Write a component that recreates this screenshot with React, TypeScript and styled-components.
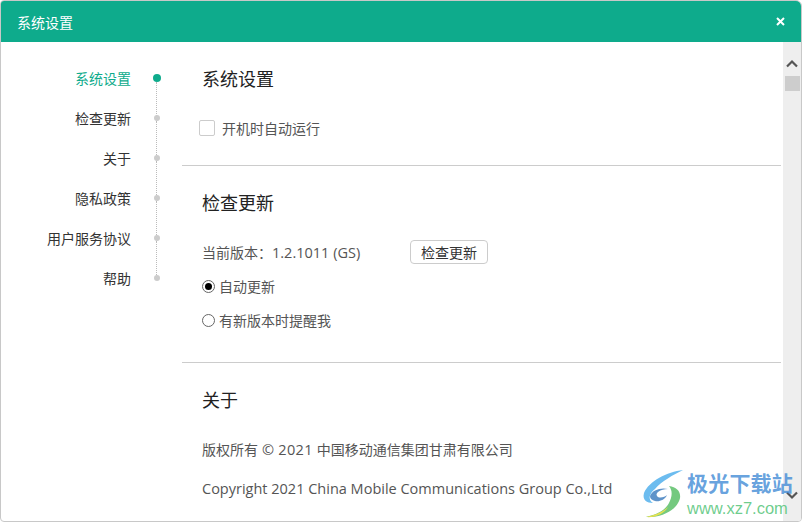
import React from 'react';
import styled, { createGlobalStyle } from 'styled-components';

const GlobalStyle = createGlobalStyle`
  html, body {
    margin: 0;
    padding: 0;
    background: #fff;
  }
  body {
    font-family: Inter, "Noto Sans CJK SC", "Liberation Sans", sans-serif;
  }
`;

const Window = styled.div`
  position: relative;
  width: 802px;
  height: 522px;
  box-sizing: border-box;
  border: 1px solid #c8c8c8;
  border-radius: 4px 6px 4px 4px;
  display: flex;
  flex-direction: column;
  overflow: hidden;
  background: #fff;
`;

const TitleBar = styled.header`
  flex: 0 0 41px;
  display: flex;
  align-items: center;
  justify-content: space-between;
  padding: 0 16px 0 16px;
  background: #0eab8c;
  color: #fff;
  font-size: 14px;
`;

const CloseButton = styled.button`
  display: flex;
  padding: 0;
  border: none;
  background: none;
`;

const Body = styled.div`
  flex: 1;
  min-height: 0;
  display: flex;
`;

const Nav = styled.nav`
  flex: 0 0 181px;
  box-sizing: border-box;
  padding-top: 16px;
`;

const NavRow = styled.div<{ $active?: boolean }>`
  height: 40px;
  display: flex;
  align-items: center;
  justify-content: flex-end;
  padding-right: 21px;
  font-size: 14px;
  color: ${(p) => (p.$active ? '#0eab8c' : '#333')};
`;

const NavDot = styled.span<{ $active?: boolean; $last?: boolean }>`
  position: relative;
  width: ${(p) => (p.$active ? '8px' : '6px')};
  height: ${(p) => (p.$active ? '8px' : '6px')};
  margin-left: ${(p) => (p.$active ? '22px' : '23px')};
  margin-right: ${(p) => (p.$active ? '0' : '1px')};
  border-radius: 50%;
  background: ${(p) => (p.$active ? '#0eab8c' : '#ccc')};

  &::after {
    content: '';
    display: ${(p) => (p.$last ? 'none' : 'block')};
    position: absolute;
    left: ${(p) => (p.$active ? '3px' : '2px')};
    top: 100%;
    height: 36px;
    border-left: 1px dotted #bbb;
  }
`;

const Main = styled.main`
  flex: 0 0 599px;
  overflow: hidden;
`;

const Section = styled.section<{ $height: number; $ruled?: boolean }>`
  height: ${(p) => p.$height}px;
  box-sizing: border-box;
  padding: 24px 20px 0;
  border-bottom: ${(p) => (p.$ruled ? '1px solid #ccc' : 'none')};
`;

const SectionTitle = styled.h2`
  margin: 0;
  height: 28px;
  line-height: 28px;
  font-size: 18px;
  font-weight: 400;
  color: #222;
`;

const BodyText = styled.div`
  font-size: 14px;
  color: #555;
`;

const Latin = styled.span`
  font-family: "Open Sans", sans-serif;
  font-size: 14.5px;
`;

const YearText = styled(Latin)`
  letter-spacing: 0.3px;
`;

const CheckRow = styled.label`
  display: flex;
  align-items: center;
  height: 20px;
  margin: 24px 0 0 -3px;
  font-size: 14px;
  color: #555;
`;

const CheckBox = styled.span`
  width: 14px;
  height: 14px;
  margin-right: 7px;
  border: 1px solid #ccc;
  border-radius: 2px;
  background: #fff;
`;

const VersionRow = styled(BodyText)`
  display: flex;
  align-items: center;
  height: 24px;
  margin-top: 22px;
`;

const VersionLabel = styled.span`
  width: 208px;
`;

const UpdateButton = styled.button`
  width: 78px;
  height: 24px;
  padding: 0;
  border: 1px solid #ccc;
  border-radius: 4px;
  background: #fff;
  font-family: inherit;
  font-size: 14px;
  color: #333;
`;

const RadioRow = styled.label<{ $gap: number }>`
  display: flex;
  align-items: center;
  height: 20px;
  margin-top: ${(p) => p.$gap}px;
  font-size: 14px;
  color: #555;
`;

const Radio = styled.span<{ $checked?: boolean }>`
  display: flex;
  align-items: center;
  justify-content: center;
  box-sizing: border-box;
  width: 13px;
  height: 13px;
  margin-right: 4px;
  border: 1px solid #666;
  border-radius: 50%;

  &::after {
    content: '';
    display: ${(p) => (p.$checked ? 'block' : 'none')};
    width: 7px;
    height: 7px;
    border-radius: 50%;
    background: #000;
  }
`;

const AboutLine = styled(BodyText)<{ $gap: number }>`
  margin-top: ${(p) => p.$gap}px;
  height: 20px;
  line-height: 20px;
  white-space: nowrap;
`;

const ScrollTrack = styled.div`
  flex: 0 0 18px;
  margin-left: 2px;
  display: flex;
  flex-direction: column;
  align-items: center;
  background: #eeeeee;
  padding: 17px 0 21px;
`;

const ScrollThumb = styled.div`
  width: 15px;
  height: 15px;
  margin-top: 8px;
  background: #cdcdcd;
`;

const ScrollSpacer = styled.div`
  flex: 1;
`;

const ScrollArrow = styled.svg`
  display: block;
`;

const Watermark = styled.div`
  position: absolute;
  right: 8px;
  bottom: 2px;
  display: flex;
  align-items: center;
  gap: 2px;
  pointer-events: none;
`;

const WatermarkText = styled.div`
  display: flex;
  flex-direction: column;
  align-items: flex-start;
`;

const WatermarkName = styled.span`
  font-size: 21px;
  line-height: 25px;
  margin-bottom: 3px;
  font-weight: 700;
  letter-spacing: 0.2px;
  color: rgba(64, 138, 214, 0.8);
`;

const WatermarkUrl = styled.span`
  font-family: "Liberation Sans", sans-serif;
  font-size: 16.5px;
  line-height: 19px;
  color: rgba(84, 196, 120, 0.85);
`;

const navItems = ['系统设置', '检查更新', '关于', '隐私政策', '用户服务协议', '帮助'];

const App: React.FC = () => (
  <>
    <GlobalStyle />
    <Window>
      <TitleBar>
        系统设置
        <CloseButton aria-label="关闭">
          <svg width="9" height="9" viewBox="0 0 9 9">
            <path d="M1 1L8 8M8 1L1 8" stroke="#fff" strokeWidth="2" />
          </svg>
        </CloseButton>
      </TitleBar>
      <Body>
        <Nav>
          {navItems.map((item, i) => (
            <NavRow key={item} $active={i === 0}>
              {item}
              <NavDot $active={i === 0} $last={i === navItems.length - 1} />
            </NavRow>
          ))}
        </Nav>
        <Main>
          <Section $height={124} $ruled>
            <SectionTitle>系统设置</SectionTitle>
            <CheckRow>
              <CheckBox />
              开机时自动运行
            </CheckRow>
          </Section>
          <Section $height={197} $ruled>
            <SectionTitle>检查更新</SectionTitle>
            <VersionRow>
              <VersionLabel>
                当前版本：<Latin>1.2.1011 (GS)</Latin>
              </VersionLabel>
              <UpdateButton>检查更新</UpdateButton>
            </VersionRow>
            <RadioRow $gap={12}>
              <Radio $checked />
              自动更新
            </RadioRow>
            <RadioRow $gap={14}>
              <Radio />
              有新版本时提醒我
            </RadioRow>
          </Section>
          <Section $height={158}>
            <SectionTitle>关于</SectionTitle>
            <AboutLine $gap={25}>
              版权所有 <YearText>© 2021</YearText> 中国移动通信集团甘肃有限公司
            </AboutLine>
            <AboutLine $gap={19}>
              <Latin>Copyright 2021 China Mobile Communications Group Co.,Ltd</Latin>
            </AboutLine>
          </Section>
        </Main>
        <ScrollTrack>
          <ScrollArrow width="12" height="9" viewBox="0 0 12 9">
            <path d="M1 7.5L6 2.5L11 7.5" fill="none" stroke="#555" strokeWidth="2.2" />
          </ScrollArrow>
          <ScrollThumb />
          <ScrollSpacer />
          <ScrollArrow width="12" height="9" viewBox="0 0 12 9">
            <path d="M1 1.5L6 6.5L11 1.5" fill="none" stroke="#555" strokeWidth="2.2" />
          </ScrollArrow>
        </ScrollTrack>
      </Body>
      <Watermark>
        <svg width="44" height="50" viewBox="0 0 44 50">
          <path d="M42 1C26 3 8 12 3 24C1 31 6 34 12 34C6 30 9 24 14 20C21 12 32 6 42 1Z" fill="#6cbcef" />
          <path d="M9 27C11 21 20 18 27 20C19 20 14 24 16 27C18 30 24 28 26 26C24 31 18 33 14 32C11 31 9 30 9 27Z" fill="#5f93c9" />
          <path d="M28 17C38 18 42 26 37 34C32 43 18 49 5 48C14 46 24 42 28 34C31 28 32 22 28 17Z" fill="#74c97f" />
          <path d="M5 48C14 46 22 43 27 38C24 44 15 49 5 48Z" fill="#e6e04f" />
        </svg>
        <WatermarkText>
          <WatermarkName>极光下载站</WatermarkName>
          <WatermarkUrl>www.xz7.com</WatermarkUrl>
        </WatermarkText>
      </Watermark>
    </Window>
  </>
);

export default App;
